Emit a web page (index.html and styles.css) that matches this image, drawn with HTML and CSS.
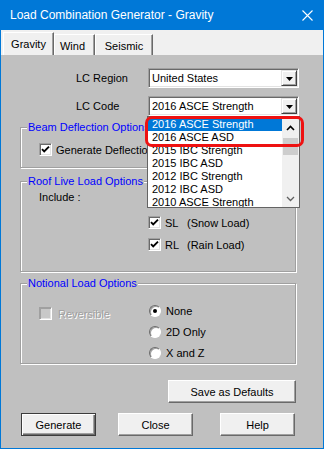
FILE: index.html
```html
<!DOCTYPE html>
<html>
<head>
<meta charset="utf-8">
<link rel="stylesheet" href="styles.css">
</head>
<body>
<div class="window">
  <div class="titlebar">
    <span class="title">Load Combination Generator - Gravity</span>
    <svg class="close" width="11" height="11" viewBox="0 0 11 11"><path d="M0.5 0.5 L10.5 10.5 M10.5 0.5 L0.5 10.5" stroke="#fff" stroke-width="1.1" fill="none"/></svg>
  </div>
  <div class="tabs">
    <div class="tab active">Gravity</div>
    <div class="tab tab-wind">Wind</div>
    <div class="tab tab-seismic">Seismic</div>
  </div>
  <div class="page">
    <div class="form-row">
      <span class="form-label">LC Region</span>
      <div class="combo">
        <span>United States</span>
        <span class="combo-btn"><svg width="7" height="4" viewBox="0 0 7 4"><path d="M0 0 H7 L3.5 4 Z" fill="#000"/></svg></span>
      </div>
    </div>
    <div class="form-row row-code">
      <span class="form-label">LC Code</span>
      <div class="combo">
        <span>2016 ASCE Strength</span>
        <span class="combo-btn"><svg width="7" height="4" viewBox="0 0 7 4"><path d="M0 0 H7 L3.5 4 Z" fill="#000"/></svg></span>
        <div class="droplist">
          <div class="items">
            <div class="item selected">2016 ASCE Strength</div>
            <div class="item">2016 ASCE ASD</div>
            <div class="item">2015 IBC Strength</div>
            <div class="item">2015 IBC ASD</div>
            <div class="item">2012 IBC Strength</div>
            <div class="item">2012 IBC ASD</div>
            <div class="item">2010 ASCE Strength</div>
          </div>
          <div class="scrollbar">
            <svg class="sb-arrow" width="9" height="6" viewBox="0 0 9 6"><path d="M1 5 L4.5 1.5 L8 5" stroke="#000" stroke-width="1.6" fill="none"/></svg>
            <div class="sb-thumb"></div>
            <svg class="sb-arrow sb-down" width="9" height="6" viewBox="0 0 9 6"><path d="M1 1 L4.5 4.5 L8 1" stroke="#606060" stroke-width="1.3" fill="none"/></svg>
          </div>
        </div>
        <div class="callout"></div>
      </div>
    </div>

    <div class="group group-beam">
      <span class="legend">Beam Deflection Options</span>
      <div class="check-row beam-row">
        <span class="checkbox"><svg width="9" height="9" viewBox="0 0 9 9"><path d="M1 4.2 L3.2 6.4 L8 1.6" stroke="#000" stroke-width="1.9" fill="none"/></svg></span>
        <span class="check-text">Generate Deflections</span>
      </div>
    </div>

    <div class="group group-roof">
      <span class="legend">Roof Live Load Options</span>
      <div class="include">Include :</div>
      <div class="check-row roof-sl">
        <span class="checkbox"><svg width="9" height="9" viewBox="0 0 9 9"><path d="M1 4.2 L3.2 6.4 L8 1.6" stroke="#000" stroke-width="1.9" fill="none"/></svg></span>
        <span class="check-text"><span class="abbr">SL</span>(Snow Load)</span>
      </div>
      <div class="check-row roof-rl">
        <span class="checkbox"><svg width="9" height="9" viewBox="0 0 9 9"><path d="M1 4.2 L3.2 6.4 L8 1.6" stroke="#000" stroke-width="1.9" fill="none"/></svg></span>
        <span class="check-text"><span class="abbr">RL</span>(Rain Load)</span>
      </div>
    </div>

    <div class="group group-notional">
      <span class="legend">Notional Load Options</span>
      <div class="notional-body">
        <div class="notional-left">
          <div class="check-row">
            <span class="checkbox disabled"></span>
            <span class="check-text disabled-text">Reversible</span>
          </div>
        </div>
        <div class="radios">
          <div class="radio-row"><span class="radio on"></span><span>None</span></div>
          <div class="radio-row"><span class="radio"></span><span>2D Only</span></div>
          <div class="radio-row"><span class="radio"></span><span>X and Z</span></div>
        </div>
      </div>
    </div>

    <div class="defaults-row">
      <div class="btn btn-wide">Save as Defaults</div>
    </div>
    <div class="buttons-row">
      <div class="btn btn-default">Generate</div>
      <div class="btn btn-close">Close</div>
      <div class="btn btn-help">Help</div>
    </div>
  </div>
</div>
</body>
</html>
```

FILE: styles.css
```css
* { box-sizing: border-box; }
html, body { margin: 0; padding: 0; }
body {
  width: 324px;
  height: 449px;
  overflow: hidden;
  font-family: "Liberation Sans", Arial, sans-serif;
  font-size: 11px;
  color: #000;
  background: #c0c0c0;
}
.window {
  width: 324px;
  height: 449px;
  border: 1px solid #0078d7;
  border-top: 0;
  display: flex;
  flex-direction: column;
  background: #c0c0c0;
}
.titlebar {
  height: 30px;
  flex: none;
  margin: 0 -1px;
  background: #0078d7;
  color: #fff;
  display: flex;
  align-items: center;
  justify-content: space-between;
  padding: 0 11px 0 10px;
  font-size: 12px;
}
.title { padding-bottom: 1px; }
.close { display: block; margin-top: 0px; }

.tabs {
  height: 25px;
  flex: none;
  background: #f0f0f0;
  display: flex;
  align-items: flex-end;
  padding-left: 2px;
}
.tab {
  height: 21px;
  display: flex;
  align-items: center;
  justify-content: center;
  border-left: 1px solid #fff;
  border-top: 1px solid #fff;
  border-right: 1px solid #696969;
  box-shadow: inset -1px 0 #a0a0a0;
  background: #f0f0f0;
  padding-top: 1px;
}
.tab.active { height: 23px; width: 51px; padding-top: 0; }
.tab-wind { width: 41px; padding-right: 4px; }
.tab-seismic { width: 58px; }

.page {
  flex: 1;
  display: flex;
  flex-direction: column;
}
.form-row {
  display: flex;
  align-items: center;
  height: 20px;
  margin-top: 13px;
}
.form-row.row-code { margin-top: 8px; position: relative; z-index: 2; }
.form-label {
  width: 147px;
  padding-left: 75px;
}
.combo {
  position: relative;
  width: 151px;
  height: 20px;
  background: #fff;
  border: 1px solid;
  border-color: #a0a0a0 #fff #fff #a0a0a0;
  box-shadow: inset 1px 1px #696969, inset -1px -1px #e3e3e3;
  display: flex;
  align-items: center;
  justify-content: space-between;
  padding: 1px 1px 1px 3px;
}
.combo-btn {
  width: 16px;
  height: 16px;
  background: #f0f0f0;
  border: 1px solid;
  border-color: #e3e3e3 #404040 #404040 #e3e3e3;
  box-shadow: inset 1px 1px #fff, inset -1px -1px #a0a0a0;
  display: flex;
  align-items: center;
  justify-content: center;
}
.combo-btn svg { display: block; margin-top: 1px; }

.droplist {
  position: absolute;
  left: -2px;
  top: 19px;
  width: 153px;
  height: 92px;
  border: 1px solid #646464;
  background: #fff;
  display: flex;
  padding-top: 1px;
  overflow: hidden;
}
.items { width: 134px; }
.item {
  height: 13px;
  line-height: 13px;
  padding-left: 4px;
  white-space: nowrap;
}
.item.selected { background: #0078d7; color: #fff; }
.scrollbar {
  width: 17px;
  margin-top: -1px;
  height: 90px;
  background: #f0f0f0;
  display: flex;
  flex-direction: column;
  align-items: center;
}
.sb-arrow { display: block; margin-top: 8px; flex: none; }
.sb-thumb {
  width: 15px;
  height: 17px;
  margin-top: 7px;
  background: #cdcdcd;
  flex: none;
}
.sb-down { margin-top: auto; margin-bottom: 5px; }
.callout {
  position: absolute;
  left: -4px;
  top: 19px;
  width: 159px;
  height: 31px;
  border: 3px solid #ee1111;
  border-radius: 7px;
}

.group {
  margin-left: 19px;
  width: 276px;
  border: 1px solid #a0a0a0;
  box-shadow: inset 1px 1px #fff, 1px 1px #fff;
  display: flex;
  flex-direction: column;
  align-items: flex-start;
}
.legend {
  margin: -7px 0 0 6px;
  padding: 0 1px;
  height: 13px;
  line-height: 13px;
  background: #c0c0c0;
  color: #0000ff;
  white-space: nowrap;
}
.group-beam { margin-top: 11px; height: 41px; }
.group-roof { margin-top: 13px; height: 91px; }
.group-notional { margin-top: 11px; height: 81px; }

.check-row {
  display: flex;
  align-items: center;
  height: 13px;
  white-space: nowrap;
}
.checkbox {
  width: 13px;
  height: 13px;
  flex: none;
  background: #fff;
  border: 1px solid;
  border-color: #a0a0a0 #fff #fff #a0a0a0;
  box-shadow: inset 1px 1px #696969, inset -1px -1px #e3e3e3;
  display: flex;
  align-items: center;
  justify-content: center;
}
.checkbox svg { display: block; }
.checkbox.disabled { background: #c8c8c8; box-shadow: inset 1px 1px #a0a0a0, inset -1px -1px #e3e3e3; }
.check-text { margin-left: 4px; }
.disabled-text { color: #a0a0a0; text-shadow: 1px 1px 0 #fff; margin-left: 6px; }
.beam-row { margin: 9px 0 0 18px; }
.include { margin: 3px 0 0 18px; height: 13px; line-height: 13px; }
.roof-sl { margin: 12px 0 0 127px; }
.roof-rl { margin: 9px 0 0 127px; }
.abbr { display: inline-block; width: 22px; }

.notional-body {
  display: flex;
  align-items: flex-start;
  margin-top: 14px;
  width: 100%;
}
.notional-left { width: 128px; padding: 3px 0 0 18px; }
.radios { display: flex; flex-direction: column; gap: 8px; }
.radio-row { display: flex; align-items: center; height: 13px; }
.radio {
  width: 12px;
  height: 12px;
  border-radius: 50%;
  background: #fff;
  border: 1px solid;
  border-color: #696969 #fff #fff #696969;
  box-shadow: inset 1px 1px #a0a0a0;
  margin-right: 5px;
  display: flex;
  align-items: center;
  justify-content: center;
}
.radio.on::after {
  content: "";
  width: 4px;
  height: 4px;
  border-radius: 50%;
  background: #000;
}

.defaults-row { margin: 16px 0 0 167px; }
.btn {
  height: 23px;
  background: #f0f0f0;
  border: 1px solid;
  border-color: #fff #696969 #696969 #fff;
  box-shadow: inset -1px -1px #a0a0a0;
  display: flex;
  align-items: center;
  justify-content: center;
}
.btn-wide { width: 128px; }
.buttons-row { display: flex; margin: 10px 0 0 20px; }
.buttons-row .btn { width: 75px; }
.btn-default {
  border: 1px solid #3c3c3c;
  box-shadow: inset 1px 1px #fff, inset -1px -1px #696969, inset -2px -2px #a0a0a0;
}
.btn-close { margin-left: 22px; }
.btn-help { margin-left: 27px; }
```
